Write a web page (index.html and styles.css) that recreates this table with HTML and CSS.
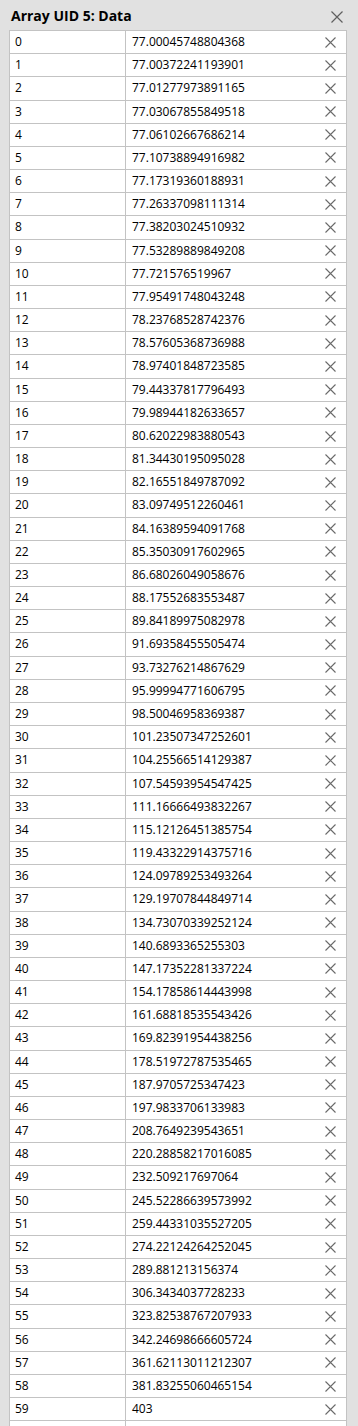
FILE: index.html
```html
<!DOCTYPE html>
<html>
<head>
<meta charset="utf-8">
<link rel="stylesheet" href="styles.css">
</head>
<body>
<div class="panel">
  <div class="header">
    <span class="title">Array UID 5: Data</span>
    <span class="close"><svg width="12" height="12" viewBox="0 0 12 12"><path d="M0.5 0.5L11.5 11.5M11.5 0.5L0.5 11.5" stroke="#5f5f5f" stroke-width="1.2" fill="none"/></svg></span>
  </div>
  <div class="grid" id="grid"></div>
</div>
<script src="app.js"></script>
</body>
</html>
```
FILE: app.js
```js
var vals = ["77.00045748804368","77.00372241193901","77.01277973891165","77.03067855849518","77.06102667686214","77.10738894916982","77.17319360188931","77.26337098111314","77.38203024510932","77.53289889849208","77.721576519967","77.95491748043248","78.23768528742376","78.57605368736988","78.97401848723585","79.44337817796493","79.98944182633657","80.62022983880543","81.34430195095028","82.16551849787092","83.09749512260461","84.16389594091768","85.35030917602965","86.68026049058676","88.17552683553487","89.84189975082978","91.69358455505474","93.73276214867629","95.99994771606795","98.50046958369387","101.23507347252601","104.25566514129387","107.54593954547425","111.16666493832267","115.12126451385754","119.43322914375716","124.09789253493264","129.19707844849714","134.73070339252124","140.6893365255303","147.17352281337224","154.17858614443998","161.68818535543426","169.82391954438256","178.51972787535465","187.9705725347423","197.9833706133983","208.7649239543651","220.28858217016085","232.509217697064","245.52286639573992","259.44331035527205","274.22124264252045","289.881213156374","306.3434037728233","323.82538767207933","342.24698666605724","361.62113011212307","381.83255060465154","403"];
var g = document.getElementById('grid');
var x = '<svg width="11" height="11" viewBox="0 0 11 11"><path d="M0.5 0.5L10.5 10.5M10.5 0.5L0.5 10.5" stroke="#6a6a6a" stroke-width="1.1" fill="none"/></svg>';
var html = '';
for (var i = 0; i < vals.length; i++) {
  html += '<div class="row"><div class="idx">' + i + '</div><div class="val">' + vals[i] + '</div><div class="del">' + x + '</div></div>';
}
html += '<div class="row"><div class="idx"></div><div class="val"></div><div class="del"></div></div>';
g.innerHTML = html;
```
FILE: styles.css
```css
html, body {
  margin: 0;
  padding: 0;
  background: #e1e1e1;
}
body {
  font-family: "Open Sans", "Noto Sans", sans-serif;
  color: #000;
  height: 1426px;
  overflow: hidden;
}
.panel {
  display: flex;
  flex-direction: column;
}
.header {
  height: 30px;
  display: flex;
  align-items: center;
  justify-content: space-between;
  padding: 0 15px 0 11px;
  box-sizing: border-box;
}
.title {
  font-weight: 700;
  font-size: 14px;
  line-height: 30px;
  padding-top: 1px;
}
.close {
  display: flex;
  width: 12px;
  height: 12px;
  margin-top: 3px;
}
.grid {
  margin: 0 11px 0 9px;
  background: #fff;
  border: 1px solid #c3c3c3;
  border-bottom: none;
}
.row {
  display: grid;
  grid-template-columns: 116px 1fr 31px;
  height: 22.18px;
  border-bottom: 1px solid #c3c3c3;
  font-size: 12px;
  line-height: 22px;
}
.idx {
  border-right: 1px solid #c3c3c3;
  padding-left: 5px;
}
.val {
  padding-left: 6px;
  white-space: nowrap;
}
.del {
  display: flex;
  align-items: center;
  justify-content: center;
}
```
